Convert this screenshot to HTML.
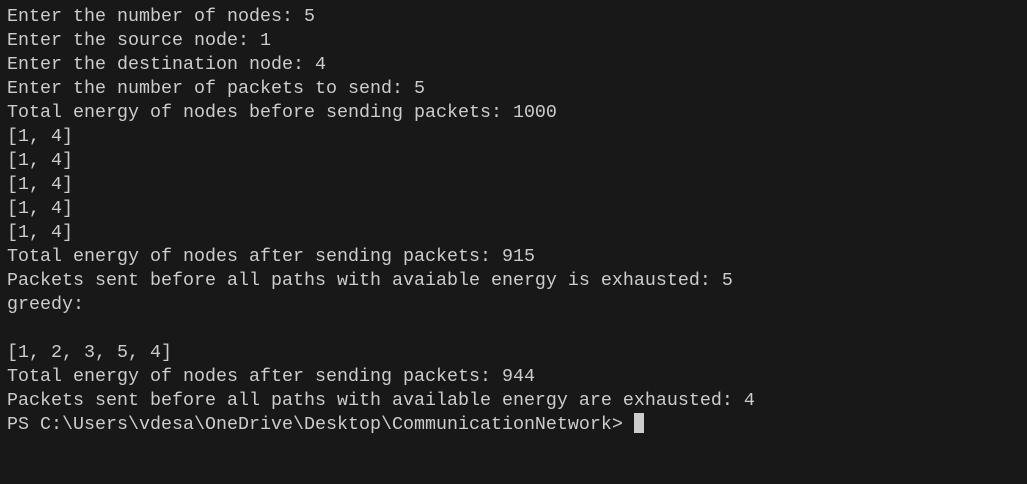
<!DOCTYPE html>
<html><head><style>
html,body{margin:0;padding:0;background:#181818;width:1027px;height:484px;overflow:hidden}
pre{margin:0;position:absolute;left:7px;top:5px;font-family:"Liberation Mono",monospace;font-size:18.33px;line-height:24px;color:#cccccc;letter-spacing:0}
.cur{display:inline-block;width:10px;height:20px;background:#cccccc;vertical-align:-4px}
</style></head><body>
<pre>Enter the number of nodes: 5
Enter the source node: 1
Enter the destination node: 4
Enter the number of packets to send: 5
Total energy of nodes before sending packets: 1000
[1, 4]
[1, 4]
[1, 4]
[1, 4]
[1, 4]
Total energy of nodes after sending packets: 915
Packets sent before all paths with avaiable energy is exhausted: 5
greedy:

[1, 2, 3, 5, 4]
Total energy of nodes after sending packets: 944
Packets sent before all paths with available energy are exhausted: 4
PS C:\Users\vdesa\OneDrive\Desktop\CommunicationNetwork&gt; <span class="cur"></span></pre>
</body></html>
